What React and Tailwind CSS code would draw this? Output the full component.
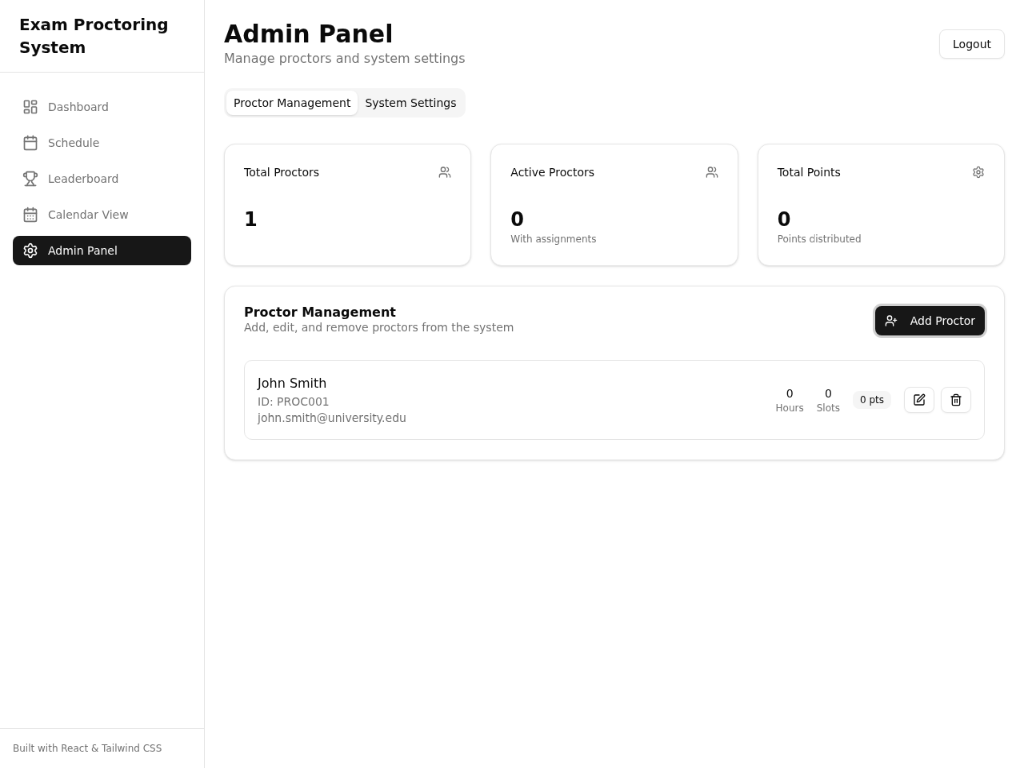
import React from "react";
import {
  LayoutDashboard,
  Calendar,
  Trophy,
  CalendarDays,
  Settings,
  Users,
  UserPlus,
  SquarePen,
  Trash2,
} from "lucide-react";

const navItems = [
  { label: "Dashboard", icon: LayoutDashboard },
  { label: "Schedule", icon: Calendar },
  { label: "Leaderboard", icon: Trophy },
  { label: "Calendar View", icon: CalendarDays },
  { label: "Admin Panel", icon: Settings, active: true },
];

const stats = [
  { title: "Total Proctors", value: "1", icon: Users },
  { title: "Active Proctors", value: "0", note: "With assignments", icon: Users },
  { title: "Total Points", value: "0", note: "Points distributed", icon: Settings },
];

function Sidebar() {
  return (
    <aside className="flex w-64 shrink-0 flex-col border-r border-[#e5e5e5]">
      <div className="border-b border-[#e5e5e5] px-6 py-4">
        <h1 className="text-xl font-bold">Exam Proctoring System</h1>
      </div>
      <nav className="flex flex-1 flex-col gap-2 px-4 py-6">
        {navItems.map(({ label, icon: Icon, active }) => (
          <a
            key={label}
            className={
              active
                ? "flex h-9 items-center gap-3 rounded-[8px] bg-[#171717] px-3 text-sm text-[#fafafa]"
                : "flex h-9 items-center gap-3 rounded-[8px] px-3 text-sm text-[#737373]"
            }
          >
            <Icon className="size-5" />
            {label}
          </a>
        ))}
      </nav>
      <div className="border-t border-[#e5e5e5] p-4 text-xs text-[#737373]">
        Built with React &amp; Tailwind CSS
      </div>
    </aside>
  );
}

function StatCard({ title, value, note, icon: Icon }) {
  return (
    <div className="flex h-[150px] flex-col gap-6 rounded-[14px] border border-[#e5e5e5] bg-white p-6 shadow-sm">
      <div className="flex items-center justify-between pb-2">
        <h3 className="text-sm">{title}</h3>
        <Icon className="size-4 text-[#737373]" />
      </div>
      <div>
        <div className="text-2xl font-bold">{value}</div>
        {note && <p className="text-xs text-[#737373]">{note}</p>}
      </div>
    </div>
  );
}

function Metric({ value, label }) {
  return (
    <div className="text-center">
      <p className="text-sm">{value}</p>
      <p className="text-xs text-[#737373]">{label}</p>
    </div>
  );
}

function IconButton({ icon: Icon, label }) {
  return (
    <button
      aria-label={label}
      className="flex h-8 items-center rounded-[8px] border border-[#e5e5e5] bg-white px-2.5 shadow-xs"
    >
      <Icon className="size-4" />
    </button>
  );
}

function ProctorCard() {
  return (
    <section className="flex flex-col gap-[30px] rounded-[14px] border border-[#e5e5e5] bg-white p-6 shadow-sm">
      <div className="flex items-start justify-between">
        <div>
          <h2 className="text-base leading-none font-semibold">Proctor Management</h2>
          <p className="text-sm text-[#737373]">Add, edit, and remove proctors from the system</p>
        </div>
        <button className="flex h-9 items-center gap-4 rounded-[8px] bg-[#171717] px-3 text-sm text-[#fafafa] ring-[3px] ring-[#a1a1a1]/50">
          <UserPlus className="size-4" />
          Add Proctor
        </button>
      </div>
      <div className="flex items-center justify-between rounded-[10px] border border-[#e5e5e5] p-4">
        <div>
          <h3 className="text-base">John Smith</h3>
          <p className="text-sm text-[#737373]">ID: PROC001</p>
          <p className="text-sm text-[#737373]">john.smith@university.edu</p>
        </div>
        <div className="flex items-center gap-4">
          <Metric value="0" label="Hours" />
          <Metric value="0" label="Slots" />
          <span className="rounded-[8px] border border-transparent bg-[#f5f5f5] px-2 py-0.5 text-xs">
            0 pts
          </span>
          <div className="flex gap-2">
            <IconButton icon={SquarePen} label="Edit" />
            <IconButton icon={Trash2} label="Delete" />
          </div>
        </div>
      </div>
    </section>
  );
}

export default function App() {
  return (
    <div className="h-screen w-screen overflow-hidden bg-white">
      <div className="flex h-[941px] w-[1280px] origin-top-left scale-x-[0.8] scale-y-[0.81615] bg-white font-['DejaVu_Sans',sans-serif] text-[#0a0a0a] will-change-[scale,transform]">
        <Sidebar />
        <main className="flex flex-1 flex-col p-6">
          <header className="flex items-center justify-between">
            <div>
              <h1 className="text-3xl font-bold">Admin Panel</h1>
              <p className="text-base text-[#737373]">Manage proctors and system settings</p>
            </div>
            <button className="h-9 rounded-[8px] border border-[#e5e5e5] bg-white px-4 text-sm shadow-xs">
              Logout
            </button>
          </header>
          <div className="mt-6 flex h-9 w-fit items-center rounded-[10px] bg-[#f5f5f5] p-[3px] text-sm">
            <button className="h-[30px] rounded-[8px] bg-white px-[9px] shadow-sm">
              Proctor Management
            </button>
            <button className="h-[30px] rounded-[8px] px-[9px]">System Settings</button>
          </div>
          <div className="mt-8 grid grid-cols-3 gap-6">
            {stats.map((s) => (
              <StatCard key={s.title} {...s} />
            ))}
          </div>
          <div className="mt-6">
            <ProctorCard />
          </div>
        </main>
      </div>
    </div>
  );
}
